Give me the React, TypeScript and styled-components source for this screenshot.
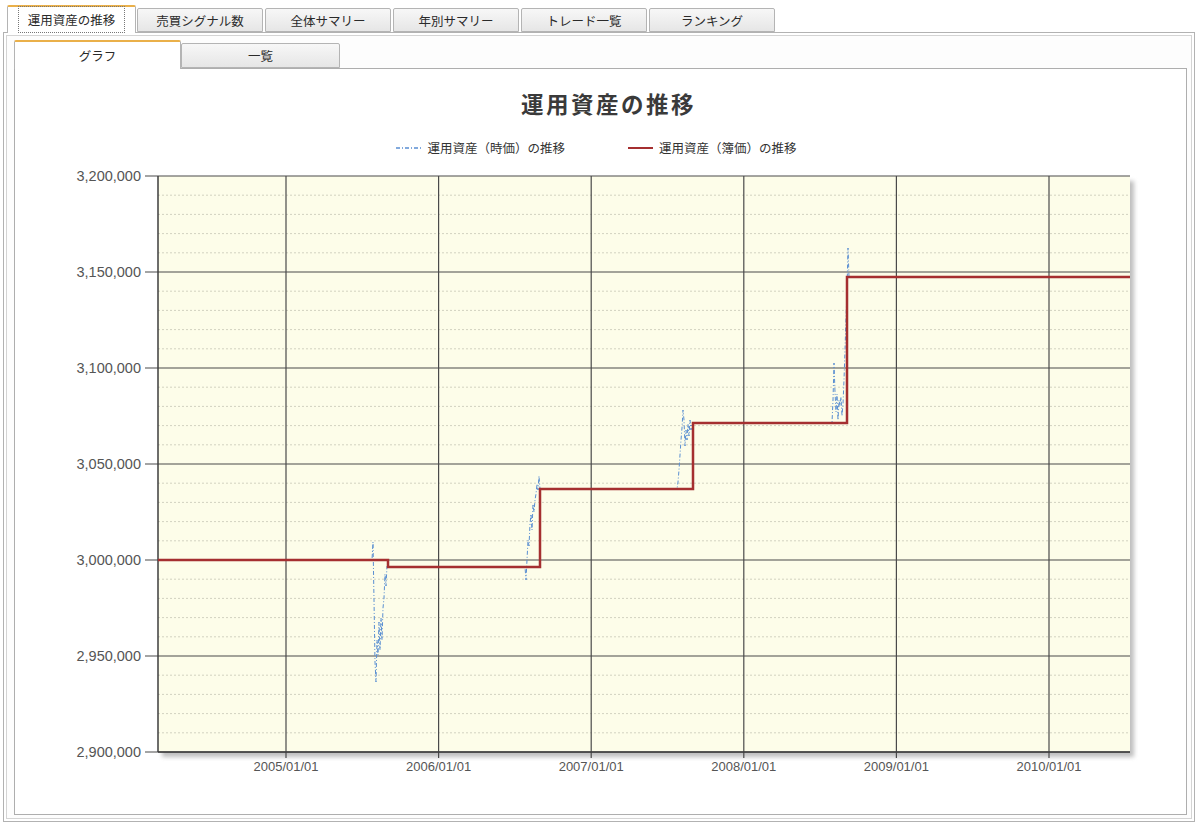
import styled, { createGlobalStyle } from "styled-components";

const GlobalStyle = createGlobalStyle`
  body {
    margin: 0;
    background: #ffffff;
    font-family: "Liberation Sans", "Noto Sans CJK JP", sans-serif;
    color: #222;
  }
`;

const Page = styled.div`
  padding: 5px 0 0 3px;
  width: 1200px;
  height: 830px;
  box-sizing: border-box;
`;

const TabStrip = styled.div<{ $inset: number; $height: number }>`
  display: flex;
  align-items: flex-end;
  height: ${({ $height }) => $height}px;
  margin-left: ${({ $inset }) => $inset}px;
  position: relative;
  z-index: 1;
`;

const Tab = styled.div<{ $active?: boolean; $width: number; $gap?: number }>`
  box-sizing: border-box;
  width: ${({ $width }) => $width}px;
  margin-right: ${({ $gap }) => $gap ?? 2}px;
  height: ${({ $active }) => ($active ? "calc(100% + 1px)" : "calc(100% - 3px)")};
  margin-bottom: ${({ $active }) => ($active ? "-1px" : "0")};
  display: flex;
  align-items: center;
  justify-content: center;
  font-family: "Noto Sans CJK JP", "Liberation Sans", sans-serif;
  font-size: 12.5px;
  color: #2a2a2a;
  border: 1px solid #b4b4b4;
  border-bottom: ${({ $active }) => ($active ? "none" : "1px solid #b4b4b4")};
  border-top: ${({ $active }) => ($active ? "2px solid #eab04a" : "1px solid #b4b4b4")};
  border-radius: 2px 2px 0 0;
  background: ${({ $active }) =>
    $active ? "#ffffff" : "linear-gradient(#f7f7f7, #e6e6e6)"};
`;

const FocusLabel = styled.span`
  outline: 1px dotted #777;
  outline-offset: 3px;
  padding: 0 6px;
  margin-top: -2px;
`;

const OuterPanel = styled.div`
  box-sizing: border-box;
  width: 1192px;
  height: 790px;
  border: 1px solid #b2b2b2;
  box-shadow: inset 0 0 0 2px #ffffff, inset 0 0 0 3px #d4d4d4;
  background: #fdfdfd;
  padding: 7px 8px 0 10px;
`;

const InnerPanel = styled.div`
  box-sizing: border-box;
  width: 1173px;
  height: 747px;
  border: 1px solid #aeaeae;
  background: #ffffff;
  display: flex;
  flex-direction: column;
`;

const Title = styled.h1`
  margin: 0;
  padding: 20px 0 0 16px;
  line-height: 28px;
  height: 48px;
  box-sizing: border-box;
  text-align: center;
  font-family: "Noto Sans CJK JP", sans-serif;
  font-size: 22.5px;
  letter-spacing: 2.5px;
  font-weight: 700;
  color: #3a3a3a;
`;

const Legend = styled.div`
  margin-top: 23px;
  height: 16px;
  display: flex;
  justify-content: center;
  gap: 63px;
  padding-right: 8px;
`;

const LegendItem = styled.div`
  display: flex;
  align-items: center;
  gap: 6px;
  font-family: "Noto Sans CJK JP", sans-serif;
  font-size: 12.5px;
  line-height: 16px;
  color: #333;
`;

const BLUE = "#5a8fd2";
const RED = "#a52f30";

const X0 = 158;
const X1 = 1130;
const Y0 = 176;
const Y1 = 752;
const yearX = (i: number) => 286 + i * 152.6;
const yTicks = ["3,200,000", "3,150,000", "3,100,000", "3,050,000", "3,000,000", "2,950,000", "2,900,000"];

const bluePoints: number[][] = [
  [158, 560], [372, 560], [373, 542], [374, 600], [375, 662], [376, 682], [377, 640],
  [378, 655], [379, 622], [380, 650], [381, 618], [382, 640], [383, 608], [384, 598],
  [385, 574], [386, 586], [387, 566], [388, 567], [525, 567], [526, 580], [527, 560],
  [528, 540], [529, 546], [530, 524], [531, 514], [532, 530], [533, 504], [534, 512],
  [535, 500], [536, 494], [537, 484], [538, 490], [539, 476], [540, 489], [677, 489],
  [678, 482], [679, 470], [680, 455], [681, 440], [682, 428], [683, 410], [684, 420],
  [685, 446], [686, 430], [687, 440], [688, 424], [689, 436], [690, 420], [691, 430],
  [692, 423], [832, 423], [833, 400], [834, 363], [835, 392], [836, 412], [837, 394],
  [838, 420], [839, 400], [840, 406], [841, 397], [842, 416], [843, 404], [844, 380],
  [845, 350], [846, 318], [847, 290], [848, 248], [849, 277], [1130, 277],
];

const Chart = () => {
  const minors: number[] = [];
  for (let k = 1; k < 30; k++) if (k % 5 !== 0) minors.push(Y0 + k * 19.2);
  return (
    <svg width={1171} height={658} viewBox="15 156 1171 658" style={{ display: "block" }}>
      <defs>
        <filter id="sh" x="-5%" y="-5%" width="110%" height="110%">
          <feGaussianBlur stdDeviation="2" />
        </filter>
      </defs>
      <rect x={X0 + 4} y={Y0 + 5} width={X1 - X0} height={Y1 - Y0} fill="#8a8a8a" opacity={0.55} filter="url(#sh)" />
      <rect x={X0} y={Y0} width={X1 - X0} height={Y1 - Y0} fill="#fdfde9" />
      {minors.map((y) => (
        <line key={y} x1={X0} x2={X1} y1={y} y2={y} stroke="#d2d2c0" strokeDasharray="2 2" />
      ))}
      {yTicks.map((t, i) => {
        const y = Y0 + i * 96;
        return (
          <g key={t}>
            <line x1={145} x2={X1} y1={y} y2={y} stroke="#4a4a4a" strokeWidth={1.2} />
            <text x={141} y={y} textAnchor="end" dominantBaseline="central" fontSize={14.5} fill="#555" fontFamily="Liberation Sans, sans-serif">
              {t}
            </text>
          </g>
        );
      })}
      {[2005, 2006, 2007, 2008, 2009, 2010].map((yr, i) => (
        <g key={yr}>
          <line x1={yearX(i)} x2={yearX(i)} y1={Y0} y2={Y1 + 6} stroke="#4a4a4a" strokeWidth={1.2} />
          <text x={yearX(i)} y={766} textAnchor="middle" dominantBaseline="central" fontSize={13} fill="#555" fontFamily="Liberation Sans, sans-serif">
            {yr}/01/01
          </text>
        </g>
      ))}
      <line x1={X0} x2={X0} y1={Y0} y2={Y1} stroke="#3c3c3c" strokeWidth={1.5} />
      <line x1={X0} x2={X1} y1={Y1} y2={Y1} stroke="#3c3c3c" strokeWidth={1.5} />
      <polyline
        points={bluePoints.map((p) => p.join(",")).join(" ")}
        fill="none"
        stroke={BLUE}
        strokeWidth={1}
        strokeDasharray="4 2 1 2"
      />
      <path d="M158,560 H388 V567 H540 V489 H693 V423 H847 V277 H1130" fill="none" stroke={RED} strokeWidth={2.5} />
    </svg>
  );
};

const LegendSwatch = ({ color, dashed }: { color: string; dashed?: boolean }) => (
  <svg width={25} height={4}>
    <line x1={0} x2={25} y1={2} y2={2} stroke={color} strokeWidth={dashed ? 1.5 : 2} strokeDasharray={dashed ? "4 2 1 2" : undefined} />
  </svg>
);

const outerTabs = ["売買シグナル数", "全体サマリー", "年別サマリー", "トレード一覧", "ランキング"];

export default function App() {
  return (
    <Page>
      <GlobalStyle />
      <TabStrip $inset={4} $height={27}>
        <Tab $active $width={129} $gap={1}>
          <FocusLabel>運用資産の推移</FocusLabel>
        </Tab>
        {outerTabs.map((t) => (
          <Tab key={t} $width={126}>
            {t}
          </Tab>
        ))}
      </TabStrip>
      <OuterPanel>
        <TabStrip $inset={0} $height={28}>
          <Tab $active $width={167} $gap={0}>
            グラフ
          </Tab>
          <Tab $width={159}>一覧</Tab>
        </TabStrip>
        <InnerPanel>
          <Title>運用資産の推移</Title>
          <Legend>
            <LegendItem>
              <LegendSwatch color={BLUE} dashed />
              運用資産（時価）の推移
            </LegendItem>
            <LegendItem>
              <LegendSwatch color={RED} />
              運用資産（簿価）の推移
            </LegendItem>
          </Legend>
          <Chart />
        </InnerPanel>
      </OuterPanel>
    </Page>
  );
}
